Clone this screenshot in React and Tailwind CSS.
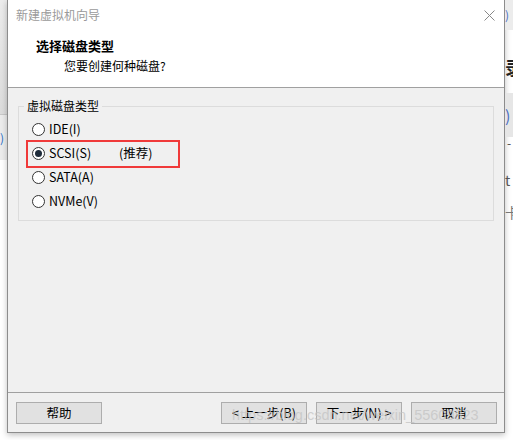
import React from 'react';

const font = { fontFamily: '"Noto Sans CJK SC", "Noto Sans", sans-serif' };

function Radio({ checked, label, extra }) {
  return (
    <div className="flex h-6 items-center">
      <span className="flex h-[13px] w-[13px] items-center justify-center rounded-full border border-[#333] bg-white">
        {checked && <span className="h-[7px] w-[7px] rounded-full bg-[#1e2b3a]" />}
      </span>
      <span className="ml-[4px] text-[12.5px] leading-none text-black">{label}</span>
      {extra && <span className="ml-[28px] text-[12.5px] leading-none text-black">{extra}</span>}
    </div>
  );
}

function Button({ children, className = '' }) {
  return (
    <button className={`h-[22px] w-[86px] shrink-0 border border-[#adadad] bg-[#e1e1e1] text-[12.5px] leading-none text-black ${className}`}>
      {children}
    </button>
  );
}

export default function App() {
  return (
    <div className="relative flex h-[440px] w-[513px] overflow-hidden bg-white" style={font}>
      {/* desktop behind, left */}
      <div className="flex w-[7px] shrink-0 flex-col overflow-hidden">
        <div className="h-[115px] border-b border-[#c8c8c8] bg-gradient-to-b from-[#ececec] to-[#dcdcdc]" />
        <div className="flex h-[45px] items-center bg-[#ececec] text-[12px] text-[#2b6cc4]">)</div>
        <div className="flex-1 bg-white" />
      </div>

      {/* wizard window */}
      <div className="flex h-[433px] w-[498px] shrink-0 flex-col border-x border-b border-[#8c8c8c] bg-white shadow-[0_2px_6px_rgba(0,0,0,0.25)]">
        <div className="flex h-[30px] items-center justify-between pl-[8px] pr-[9px]">
          <span className="text-[12px] text-[#9a9a9a]">新建虚拟机向导</span>
          <svg width="11" height="11" viewBox="0 0 11 11" stroke="#888" strokeWidth="1">
            <path d="M0.5 0.5 L10.5 10.5 M10.5 0.5 L0.5 10.5" />
          </svg>
        </div>
        <div className="h-[57px] pl-[28px] pt-[7px]">
          <div className="text-[13px] font-bold leading-[18px] text-black">选择磁盘类型</div>
          <div className="ml-[28px] mt-[2px] text-[12px] leading-[18px] text-black">您要创建何种磁盘?</div>
        </div>
        <div className="h-px bg-[#a0a0a0]" />

        <div className="flex flex-1 flex-col bg-[#f0f0f0] px-[10px] pt-[18px]">
          <div className="relative h-[115px] border border-[#dcdcdc] pl-[13px] pt-[10px]">
            <span className="absolute -top-[9px] left-[5px] bg-[#f0f0f0] px-[3px] text-[12px] leading-[16px] text-black">虚拟磁盘类型</span>
            <Radio label="IDE(I)" />
            <Radio checked label="SCSI(S)" extra="(推荐)" />
            <Radio label="SATA(A)" />
            <Radio label="NVMe(V)" />
            <div className="pointer-events-none absolute left-[7px] top-[33px] h-[28px] w-[154px] border-2 border-[#f03a3a]" />
          </div>
        </div>

        <div className="h-px bg-[#a0a0a0]" />
        <div className="flex h-[39px] items-start bg-[#f0f0f0] pl-[8px] pr-[7px] pt-[9px]">
          <Button>帮助</Button>
          <div className="flex-1" />
          <Button>&lt; 上一步(B)</Button>
          <Button className="ml-[9px]">下一步(N) &gt;</Button>
          <Button className="ml-[9px]">取消</Button>
        </div>
      </div>

      {/* desktop behind, right */}
      <div className="flex min-w-0 flex-1 flex-col overflow-hidden text-[12px] leading-none">
        <div className="flex h-[30px] items-center bg-[#ececec] text-[#4a6fc4]">)</div>
        <div className="h-[28px]" />
        <div className="h-[35px] whitespace-nowrap text-[18px] font-bold text-[#222]">录</div>
        <div className="flex h-[44px] items-center bg-[#e6e6e6] text-[16px] text-[#4a6fc4]">)</div>
        <div className="h-[16px] pl-[2px] text-[#444]">-</div>
        <div className="h-[44px] pt-[20px] text-[14px] text-[#555]">t</div>
        <div className="h-[40px] whitespace-nowrap pt-[8px] text-[14px] text-[#777]">卡</div>
        <div className="flex-1" />
      </div>

      {/* watermark */}
      <div
        className="pointer-events-none absolute left-[232px] top-[405px] whitespace-nowrap text-[14.5px] text-[rgba(195,195,195,0.75)]"
        style={{ fontFamily: '"Liberation Sans", sans-serif' }}
      >
        https://blog.csdn.net/weixin_55609823
      </div>
    </div>
  );
}
